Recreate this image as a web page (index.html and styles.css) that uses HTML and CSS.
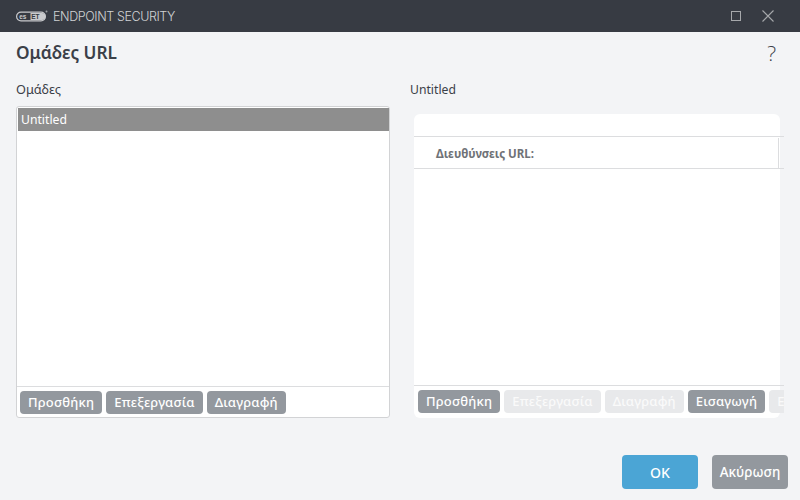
FILE: index.html
```html
<!DOCTYPE html>
<html lang="el">
<head>
<meta charset="utf-8">
<title>Ομάδες URL</title>
<link rel="stylesheet" href="styles.css">
</head>
<body>
<div class="window">
  <header class="titlebar">
    <div class="brand">
      <svg class="logo" width="32" height="12" viewBox="0 0 32 12">
        <rect x="0.6" y="2.1" width="28.8" height="8.8" rx="4.4" fill="none" stroke="#c9cacd" stroke-width="1.2"/>
        <text class="logo-text" x="3.2" y="9">es</text>
        <path d="M14.5 3H26a3.5 3.5 0 0 1 0 7H14.5z" fill="#c9cacd"/>
        <text class="logo-text logo-dark" x="15.2" y="9">ET</text>
        <circle cx="30.5" cy="1.5" r="1" fill="#9a9ca0"/>
      </svg>
      <span class="product">ENDPOINT SECURITY</span>
    </div>
    <div class="controls">
      <svg width="10" height="10" viewBox="0 0 10 10"><rect x="0.5" y="0.5" width="9" height="9" fill="none" stroke="#a6a8ab"/></svg>
      <svg width="12" height="12" viewBox="0 0 12 12"><path d="M0.5 0.5L11.5 11.5M11.5 0.5L0.5 11.5" fill="none" stroke="#a6a8ab" stroke-width="1.1"/></svg>
    </div>
  </header>
  <div class="heading">
    <h1>Ομάδες URL</h1>
    <span class="help">?</span>
  </div>
  <main class="columns">
    <section class="col col-left">
      <div class="label">Ομάδες</div>
      <div class="listbox">
        <div class="list">
          <div class="item">Untitled</div>
        </div>
        <div class="toolbar">
          <button class="btn">Προσθήκη</button>
          <button class="btn">Επεξεργασία</button>
          <button class="btn">Διαγραφή</button>
        </div>
      </div>
    </section>
    <section class="col col-right">
      <div class="label label-latin">Untitled</div>
      <div class="panel">
        <div class="search"></div>
        <div class="thead"><span class="th">Διευθύνσεις URL:</span><span class="th-rest"></span></div>
        <div class="tbody"></div>
        <div class="toolbar toolbar-right">
          <button class="btn">Προσθήκη</button>
          <button class="btn off">Επεξεργασία</button>
          <button class="btn off">Διαγραφή</button>
          <button class="btn">Εισαγωγή</button>
          <button class="btn off">Εξαγωγή</button>
        </div>
      </div>
    </section>
  </main>
  <footer class="footer">
    <button class="action primary">OK</button>
    <button class="action">Ακύρωση</button>
  </footer>
</div>
</body>
</html>
```
FILE: styles.css
```css
html, body {
  margin: 0;
  padding: 0;
}
body {
  font-family: "Noto Sans", "Open Sans", sans-serif;
  color: #3b4048;
  background: #f3f4f6;
}
.window {
  width: 800px;
  height: 500px;
  display: flex;
  flex-direction: column;
  overflow: hidden;
}
.titlebar {
  height: 32px;
  flex: none;
  background: #373b43;
  display: flex;
  align-items: center;
  justify-content: space-between;
  padding: 0 26px 0 16px;
}
.brand {
  display: flex;
  align-items: center;
  gap: 5px;
}
.logo {
  display: block;
}
.logo-text {
  font-family: "Liberation Sans", sans-serif;
  font-size: 6.5px;
  font-weight: 700;
  fill: #c9cacd;
}
.logo-dark {
  fill: #373b43;
}
.product {
  font-family: "Inter", sans-serif;
  font-size: 12.5px;
  font-weight: 300;
  letter-spacing: -0.4px;
  color: #d0d2d4;
}
.controls {
  display: flex;
  align-items: center;
  gap: 21px;
}
.controls svg {
  display: block;
}
.heading {
  height: 44px;
  flex: none;
  display: flex;
  align-items: center;
  justify-content: space-between;
  padding: 0 24px 2px 16px;
  box-sizing: border-box;
}
h1 {
  margin: 0;
  font-size: 17.3px;
  font-weight: 600;
  line-height: 22px;
  color: #3b4048;
}
.help {
  font-family: "Open Sans", sans-serif;
  font-size: 21px;
  font-weight: 300;
  line-height: 22px;
  color: #3b4048;
}
.columns {
  flex: none;
  display: flex;
  height: 342px;
  padding-left: 16px;
  gap: 20px;
}
.col {
  display: flex;
  flex-direction: column;
}
.col-left {
  width: 374px;
}
.col-right {
  width: 374px;
  overflow: hidden;
}
.label {
  font-size: 12.7px;
  line-height: 18px;
  height: 18px;
  margin-top: 4px;
  margin-bottom: 1px;
}
.label-latin {
  font-size: 12.2px;
  margin-top: 5px;
  margin-bottom: 0;
}
.listbox {
  margin-top: 7px;
  height: 312px;
  box-sizing: border-box;
  background: #fff;
  border: 1px solid #d2d3d5;
  border-radius: 3px;
  display: flex;
  flex-direction: column;
}
.list {
  flex: 1;
  padding: 1px 0 0 1px;
  min-height: 0;
}
.item {
  height: 23px;
  line-height: 23px;
  background: #8e8e8e;
  color: #fff;
  font-size: 12.2px;
  padding-left: 3px;
}
.toolbar {
  flex: none;
  height: 31px;
  box-sizing: border-box;
  border-top: 1px solid #dcdddf;
  display: flex;
  align-items: flex-start;
  gap: 4px;
  padding: 4px 0 0 3px;
}
.btn {
  flex: none;
  height: 23px;
  padding: 0 8px;
  border: 0;
  border-radius: 4px;
  background: #93989e;
  color: #fff;
  font-family: inherit;
  font-size: 13px;
  font-weight: 500;
  letter-spacing: 0.2px;
  line-height: 23px;
}
.btn.off {
  background: #e8e9eb;
  color: #fafafa;
}
.panel {
  margin: 15px 0 0 4px;
  width: 366px;
  height: 304px;
  display: flex;
  flex-direction: column;
  background: #fff;
  border-radius: 6px;
}
.search {
  height: 22px;
  flex: none;
}
.thead {
  width: 370px;
  height: 31px;
  flex: none;
  border-top: 1px solid #dcdddf;
  border-bottom: 1px solid #dcdddf;
  display: flex;
  align-items: stretch;
}
.th {
  width: 342px;
  padding-left: 22px;
  font-size: 11.5px;
  font-weight: 700;
  line-height: 31px;
  color: #6f7277;
  border-right: 1px solid #dcdddf;
  margin-top: 1px;
}
.th-rest {
  flex: 1;
}
.tbody {
  flex: 1;
  min-height: 0;
}
.toolbar-right {
  width: 370px;
  height: 33px;
  padding-left: 4px;
}
.footer {
  flex: none;
  display: flex;
  justify-content: flex-end;
  gap: 14px;
  padding: 37px 12px 0 0;
}
.action {
  width: 76px;
  height: 34px;
  border: 0;
  border-radius: 4px;
  background: #93989e;
  color: #fff;
  font-family: inherit;
  font-size: 13.5px;
  font-weight: 500;
}
.action.primary {
  background: #4ba5d5;
  font-size: 14px;
}
```
